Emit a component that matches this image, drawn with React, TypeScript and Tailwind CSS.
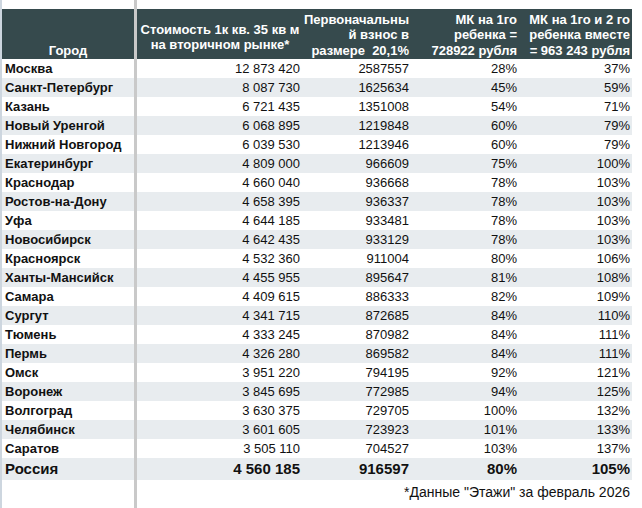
import React from "react";

const rows: [string, string, string, string, string][] = [
  ["Москва", "12 873 420", "2587557", "28%", "37%"],
  ["Санкт-Петербург", "8 087 730", "1625634", "45%", "59%"],
  ["Казань", "6 721 435", "1351008", "54%", "71%"],
  ["Новый Уренгой", "6 068 895", "1219848", "60%", "79%"],
  ["Нижний Новгород", "6 039 530", "1213946", "60%", "79%"],
  ["Екатеринбург", "4 809 000", "966609", "75%", "100%"],
  ["Краснодар", "4 660 040", "936668", "78%", "103%"],
  ["Ростов-на-Дону", "4 658 395", "936337", "78%", "103%"],
  ["Уфа", "4 644 185", "933481", "78%", "103%"],
  ["Новосибирск", "4 642 435", "933129", "78%", "103%"],
  ["Красноярск", "4 532 360", "911004", "80%", "106%"],
  ["Ханты-Мансийск", "4 455 955", "895647", "81%", "108%"],
  ["Самара", "4 409 615", "886333", "82%", "109%"],
  ["Сургут", "4 341 715", "872685", "84%", "110%"],
  ["Тюмень", "4 333 245", "870982", "84%", "111%"],
  ["Пермь", "4 326 280", "869582", "84%", "111%"],
  ["Омск", "3 951 220", "794195", "92%", "121%"],
  ["Воронеж", "3 845 695", "772985", "94%", "125%"],
  ["Волгоград", "3 630 375", "729705", "100%", "132%"],
  ["Челябинск", "3 601 605", "723923", "101%", "133%"],
  ["Саратов", "3 505 110", "704527", "103%", "137%"],
];

const grid = "grid grid-cols-[132px_3px_166px_109px_108px_112px_10px]";

export default function App() {
  return (
    <div
      className="w-[642px] h-[508px] overflow-hidden bg-white text-[13px] text-[#111] border-l-2 border-[#cdd6df]"
      style={{ fontFamily: '"Liberation Sans", Arial, sans-serif' }}
    >
      {/* top spacer */}
      <div className={`${grid} h-[9px]`}>
        <div />
        <div className="bg-[#c9c9c9]" />
      </div>
      {/* header */}
      <div className={`${grid} h-[50px] font-bold text-white leading-[15.5px]`}>
        <div className="bg-[#364a4d] flex items-end justify-center pb-[1px]">Город</div>
        <div className="bg-[#c9c9c9]" />
        <div className="bg-[#364a4d] flex items-center justify-center text-center pt-[6px]">
          <div>
            Стоимость 1к кв. 35 кв м
            <br />
            на вторичном рынке*
          </div>
        </div>
        <div className="bg-[#364a4d] flex items-end justify-end text-right pr-[3px] pb-[1px]">
          <div>
            Первоначальны
            <br />й взнос в
            <br />
            размере&nbsp; 20,1%
          </div>
        </div>
        <div className="bg-[#364a4d] flex items-end justify-end text-right pr-[3px] pb-[1px]">
          <div>
            МК на 1го
            <br />
            ребенка =
            <br />
            728922 рубля
          </div>
        </div>
        <div className="bg-[#364a4d] flex items-end justify-end text-right pr-[2px] pb-[1px]">
          <div>
            МК на 1го и 2 го
            <br />
            ребенка вместе
            <br />= 963 243 рубля
          </div>
        </div>
      </div>
      {rows.map((r, i) => {
        const bg = i % 2 === 1 ? "bg-[#e8ecef]" : "bg-white";
        return (
          <div key={r[0]} className={`${grid} h-[19px] leading-[19px]`}>
            <div className={`${bg} font-bold pl-[3px] whitespace-nowrap`}>{r[0]}</div>
            <div className="bg-[#c9c9c9]" />
            <div className={`${bg} text-right pr-[3px]`}>{r[1]}</div>
            <div className={`${bg} text-right pr-[3px]`}>{r[2]}</div>
            <div className={`${bg} text-right pr-[3px]`}>{r[3]}</div>
            <div className={`${bg} text-right pr-[2px]`}>{r[4]}</div>
          </div>
        );
      })}
      <div className={`${grid} h-[22px] leading-[22px] font-bold text-[15px]`}>
        <div className="bg-[#e8ecef] pl-[3px]">Россия</div>
        <div className="bg-[#c9c9c9]" />
        <div className="bg-[#e8ecef] text-right pr-[3px]">4 560 185</div>
        <div className="bg-[#e8ecef] text-right pr-[3px]">916597</div>
        <div className="bg-[#e8ecef] text-right pr-[3px]">80%</div>
        <div className="bg-[#e8ecef] text-right pr-[2px]">105%</div>
      </div>
      <div className={`${grid} h-[28px]`}>
        <div />
        <div className="bg-[#c9c9c9]" />
        <div className="col-span-4 text-right text-[14px] pr-[2px] pt-[3px] leading-[19px] whitespace-nowrap">
          *Данные "Этажи" за февраль 2026
        </div>
      </div>
    </div>
  );
}
